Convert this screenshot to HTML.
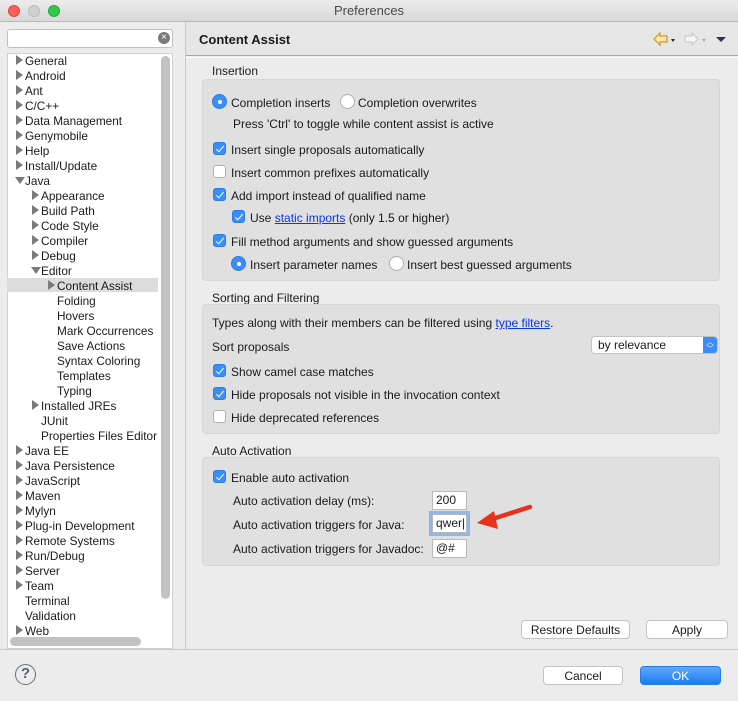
<!DOCTYPE html><html><head><style>
*{margin:0;padding:0;box-sizing:border-box}
body{width:738px;height:701px;background:#ececec;font-family:"Liberation Sans",sans-serif;font-size:12px;color:#1a1a1a;position:relative;overflow:hidden}
.a{position:absolute;white-space:nowrap;line-height:14px;padding-top:1px}
.t{position:absolute;white-space:nowrap;line-height:14px;padding-top:1px;font-size:11.8px}
.tri{position:absolute;width:0;height:0;border-top:5px solid transparent;border-bottom:5px solid transparent;border-left:7px solid #7a7a7a}
.trd{position:absolute;width:0;height:0;border-left:5px solid transparent;border-right:5px solid transparent;border-top:7px solid #7a7a7a}
.box{position:absolute;left:202px;width:518px;background:#e0e0e0;border:1px solid #d6d6d6;border-radius:4px}
.cb{position:absolute;width:13px;height:13px;border-radius:3px;background:#3b8ef5;border:1px solid #2f7de0}
.cb:after{content:"";position:absolute;left:3.5px;top:1px;width:3px;height:7px;border:solid #fff;border-width:0 1.8px 1.8px 0;transform:rotate(40deg)}
.cbo{position:absolute;width:13px;height:13px;border-radius:3px;background:#fff;border:1px solid #b0b0b0}
.rb{position:absolute;width:15px;height:15px;border-radius:50%;background:#3b8ef5;border:1px solid #2f7de0}
.rb:after{content:"";position:absolute;left:4.5px;top:4.5px;width:4px;height:4px;border-radius:50%;background:#fff}
.rbo{position:absolute;width:15px;height:15px;border-radius:50%;background:#fff;border:1px solid #b0b0b0}
.btn{position:absolute;height:19px;background:#fff;border:1px solid #c4c4c4;border-radius:4px;text-align:center;line-height:18px;font-size:12px}
.inp{position:absolute;width:35px;height:19px;background:#fff;border:1px solid #b8b8b8;line-height:17px;padding-left:3px}
a{color:#0a35e8;text-decoration:underline}
</style></head><body>
<div style="position:absolute;left:0;top:0;width:738px;height:22px;background:linear-gradient(#ececec,#d8d8d8);border-bottom:1px solid #b8b8b8"></div>
<div style="position:absolute;left:8px;top:5px;width:12px;height:12px;border-radius:50%;background:#fc5f57;border:1px solid #df4744"></div>
<div style="position:absolute;left:28px;top:5px;width:12px;height:12px;border-radius:50%;background:#d0d0d0;border:1px solid #bcbcbc"></div>
<div style="position:absolute;left:48px;top:5px;width:12px;height:12px;border-radius:50%;background:#34c84a;border:1px solid #25a93a"></div>
<div class="a" style="left:0;width:738px;text-align:center;top:3px;font-size:13px;color:#4a4a4a">Preferences</div>
<div style="position:absolute;left:7px;top:29px;width:166px;height:19px;background:#fff;border:1px solid #c0c0c0;border-radius:3px"></div>
<div style="position:absolute;left:158px;top:32px;width:12px;height:12px;border-radius:50%;background:#7b7b7b;color:#fff;font-size:10px;line-height:12px;text-align:center">×</div>
<div style="position:absolute;left:7px;top:53px;width:166px;height:596px;background:#fff;border:1px solid #d0d0d0"></div>
<div style="position:absolute;left:161px;top:56px;width:9px;height:543px;background:#c2c2c2;border-radius:5px"></div>
<div style="position:absolute;left:10px;top:637px;width:131px;height:9px;background:#c2c2c2;border-radius:5px"></div>
<div style="position:absolute;left:7px;top:278px;width:151px;height:14px;background:#dcdcdc"></div>
<div style="position:absolute;left:185px;top:22px;width:1px;height:628px;background:#c8c8c8"></div>
<div style="position:absolute;left:0;top:649px;width:738px;height:1px;background:#c8c8c8"></div>
<div id="tree"></div>
<script>
var items=[[0,1,"General"],[0,1,"Android"],[0,1,"Ant"],[0,1,"C/C++"],[0,1,"Data Management"],[0,1,"Genymobile"],[0,1,"Help"],[0,1,"Install/Update"],[0,2,"Java"],[1,1,"Appearance"],[1,1,"Build Path"],[1,1,"Code Style"],[1,1,"Compiler"],[1,1,"Debug"],[1,2,"Editor"],[2,1,"Content Assist"],[2,0,"Folding"],[2,0,"Hovers"],[2,0,"Mark Occurrences"],[2,0,"Save Actions"],[2,0,"Syntax Coloring"],[2,0,"Templates"],[2,0,"Typing"],[1,1,"Installed JREs"],[1,0,"JUnit"],[1,0,"Properties Files Editor"],[0,1,"Java EE"],[0,1,"Java Persistence"],[0,1,"JavaScript"],[0,1,"Maven"],[0,1,"Mylyn"],[0,1,"Plug-in Development"],[0,1,"Remote Systems"],[0,1,"Run/Debug"],[0,1,"Server"],[0,1,"Team"],[0,0,"Terminal"],[0,0,"Validation"],[0,1,"Web"]];
var h="";items.forEach(function(it,i){var cy=60+i*15,x=25+it[0]*16;
if(it[1]==1)h+='<div class="tri" style="left:'+(x-9)+'px;top:'+(cy-5)+'px"></div>';
if(it[1]==2)h+='<div class="trd" style="left:'+(x-10)+'px;top:'+(cy-3)+'px"></div>';
h+='<div class="t" style="left:'+x+'px;top:'+(cy-7)+'px">'+it[2]+'</div>';});
document.getElementById("tree").outerHTML=h;
</script>
<div style="position:absolute;left:15px;top:664px;width:21px;height:21px;border-radius:50%;border:1.5px solid #6a6f7a;color:#5a6070;font-weight:bold;font-size:15px;text-align:center;line-height:18px">?</div>
<div style="position:absolute;left:186px;top:22px;width:552px;height:34px;background:#e6e6e6;border-bottom:1px solid #a8a8a8"></div>
<div style="position:absolute;left:186px;top:57px;width:552px;height:1px;background:#fff"></div>
<div class="a" style="left:199px;top:32px;font-weight:bold;font-size:13px">Content Assist</div>
<svg style="position:absolute;left:652px;top:31px" width="80" height="16"><path d="M2 8 L8 2 L8 5 L15 5 L15 11 L8 11 L8 14 Z" fill="#fde6a8" stroke="#c9992a" stroke-width="1.2"/><path d="M19 8 l2 3 l2 -3z" fill="#222"/><path d="M46 8 L40 2 L40 5 L33 5 L33 11 L40 11 L40 14 Z" fill="#f4f4f4" stroke="#ccc" stroke-width="1.2"/><path d="M50 8 l2 3 l2 -3z" fill="#aaa"/><path d="M64 6 l5 5 l5 -5z" fill="#3a2a5a"/></svg>
<div class="a" style="left:212px;top:63px">Insertion</div>
<div class="box" style="top:79px;height:202px"></div>
<div class="rb" style="left:212px;top:94px"></div><div class="a" style="left:231px;top:95px">Completion inserts</div>
<div class="rbo" style="left:340px;top:94px"></div><div class="a" style="left:358px;top:95px">Completion overwrites</div>
<div class="a" style="left:233px;top:116px">Press 'Ctrl' to toggle while content assist is active</div>
<div class="cb" style="left:213px;top:142px"></div><div class="a" style="left:231px;top:142px">Insert single proposals automatically</div>
<div class="cbo" style="left:213px;top:165px"></div><div class="a" style="left:231px;top:165px">Insert common prefixes automatically</div>
<div class="cb" style="left:213px;top:188px"></div><div class="a" style="left:231px;top:188px">Add import instead of qualified name</div>
<div class="cb" style="left:232px;top:210px"></div><div class="a" style="left:250px;top:210px">Use <a>static imports</a> (only 1.5 or higher)</div>
<div class="cb" style="left:213px;top:234px"></div><div class="a" style="left:231px;top:234px">Fill method arguments and show guessed arguments</div>
<div class="rb" style="left:231px;top:256px"></div><div class="a" style="left:250px;top:257px">Insert parameter names</div>
<div class="rbo" style="left:389px;top:256px"></div><div class="a" style="left:407px;top:257px">Insert best guessed arguments</div>
<div class="a" style="left:212px;top:290px">Sorting and Filtering</div>
<div class="box" style="top:304px;height:130px"></div>
<div class="a" style="left:212px;top:315px">Types along with their members can be filtered using <a>type filters</a>.</div>
<div class="a" style="left:212px;top:339px">Sort proposals</div>
<div style="position:absolute;left:591px;top:336px;width:127px;height:18px;background:#fff;border:1px solid #c4c4c4;border-radius:4px;overflow:hidden"><div class="a" style="left:6px;top:0px">by relevance</div><div style="position:absolute;right:0;top:0;width:14px;height:18px;background:#3b8ef5;color:#fff;font-size:7px;line-height:7px;text-align:center;padding-top:2px">︿<br>﹀</div></div>
<div class="cb" style="left:213px;top:364px"></div><div class="a" style="left:231px;top:364px">Show camel case matches</div>
<div class="cb" style="left:213px;top:387px"></div><div class="a" style="left:231px;top:387px">Hide proposals not visible in the invocation context</div>
<div class="cbo" style="left:213px;top:410px"></div><div class="a" style="left:231px;top:410px">Hide deprecated references</div>
<div class="a" style="left:212px;top:443px">Auto Activation</div>
<div class="box" style="top:457px;height:109px"></div>
<div class="cb" style="left:213px;top:470px"></div><div class="a" style="left:231px;top:470px">Enable auto activation</div>
<div class="a" style="left:233px;top:493px">Auto activation delay (ms):</div>
<div class="inp" style="left:432px;top:491px">200</div>
<div class="a" style="left:233px;top:517px">Auto activation triggers for Java:</div>
<div class="inp" style="left:432px;top:514px;box-shadow:0 0 0 3px #8cb8ef">qwer|</div>
<div class="a" style="left:233px;top:541px">Auto activation triggers for Javadoc:</div>
<div class="inp" style="left:432px;top:539px">@#</div>
<svg style="position:absolute;left:472px;top:502px" width="62" height="30"><path d="M58 5 L14 19" stroke="#e8321c" stroke-width="4.5" stroke-linecap="round"/><path d="M5 21 L22 9 L26 27 Z" fill="#e8321c"/></svg>
<div class="btn" style="left:521px;top:620px;width:109px">Restore Defaults</div>
<div class="btn" style="left:646px;top:620px;width:82px">Apply</div>
<div class="btn" style="left:543px;top:666px;width:80px">Cancel</div>
<div class="btn" style="left:640px;top:666px;width:81px;background:linear-gradient(#5ea9f9,#1a7df3);border-color:#2a7ee8;color:#fff">OK</div>
</body></html>
